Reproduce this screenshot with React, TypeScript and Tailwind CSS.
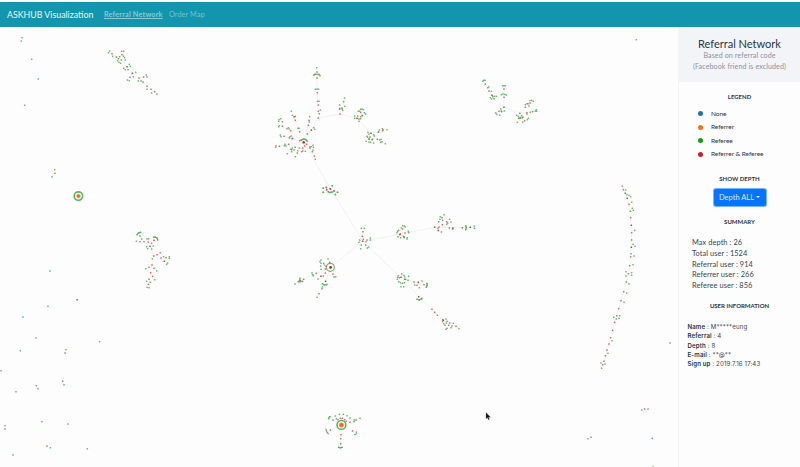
import React from "react";

type Cluster = {
  ox: number;
  oy: number;
  links?: string[];
  green?: string;
  red?: string;
  dark?: string;
  orange?: string;
  blue?: string;
  arcs?: string[];
};

// Each cluster keeps its own local grid, three units per pixel.
const clusters: Cluster[] = [
  {
    ox: 0, oy: 0,
    links: ["M336 161L349 171L364 179L381 200L397 220L417 234L429 246L441 259L464 275", "M366 164V180M397 220L390 232M417 234L431 231"],
    green: "66,113 329,153 325,158 338,169 365,154 371,154 371,169 374,173 376,180 359,170 355,176 353,182 357,187 362,190 388,193 391,199 371,205 376,209 384,209 407,217 400,230 382,240 388,242 439,225 441,231 415,243 423,243 441,268 455,279 471,282",
    red: "336,161 349,171 366,164 390,232 417,234 431,231 429,246 441,259 453,268 464,275",
    dark: "381,200 397,220",
    orange: "64,123 364,180",
    blue: "95,178 115,237 74,316",
  },
  {
    ox: 260, oy: 60,
    links: ["M172 36L171 98L175 174L240 162L292 175L333 220L357 240", "M175 174L131 246L211 386L232 420", "M131 246L60 192M131 246L98 164M131 246L72 228M131 246L58 258M131 246L95 272M131 246L163 288M131 246L147 182M240 162L254 114M292 175L303 157M333 220L368 212"],
    green: "170,23 161,45 165,42 177,43 180,47 166,88 171,87 176,88 173,124 177,124 181,150 94,154 97,166 102,170 106,169 57,179 62,176 56,184 58,197 56,200 61,225 63,230 114,205 117,205 81,206 85,203 88,207 149,170 148,186 154,210 161,203 164,208 90,230 94,228 88,234 96,236 48,257 47,262 73,257 75,253 78,258 97,264 92,268 95,275 102,270 82,281 106,290 113,272 125,275 136,274 149,261 150,265 159,256 160,262 159,270 166,298 123,241 126,239 130,237 135,237 139,240 142,244 217,377 190,385 189,397 205,395 209,398 214,397 232,397 226,403 254,114 239,135 254,139 239,145 248,151 247,147 302,148 306,147 310,149 295,154 299,153 313,158 317,162 284,168 306,166 302,170 284,175 302,176 297,184 324,217 327,222 321,229 323,232 328,236 341,224 343,228 318,244 327,246 332,247 341,249 338,237 367,206 369,209 358,210 381,209 355,217 359,240 363,238 362,247 376,251",
    red: "171,36 171,54 172,98 175,135 175,154 178,161 175,174 103,170 106,181 67,185 67,199 92,212 72,229 98,235 86,253 58,259 105,262 95,269 119,215 142,222 154,211 145,196 147,181 119,242 118,264 128,264 134,258 128,273 112,279 163,288 157,275 140,253 153,260 199,383 200,390 222,393 240,162 251,125 246,144 239,148 302,157 307,167 293,168 297,177 327,238 352,238 336,239 366,245 356,216 368,212 330,231",
    dark: "131,247 211,386 291,175 333,220",
    arcs: ["M161 46Q171 38 180 47", "M121 242Q131 231 142 244"],
  },
  {
    ox: 280, oy: 180,
    links: ["M135 0L164 44L248 184L361 162L464 142L583 142", "M248 184L152 262L137 304L111 352M152 262L98 283L45 312", "M248 184L363 293L418 352L456 388L490 421L536 444M363 293L435 314M464 142L486 113"],
    green: "157,17 129,24 130,37 145,35 151,37 157,36 166,44 173,37 244,145 253,145 271,174 271,180 239,180 237,187 258,185 242,206 262,204 266,201 368,137 373,138 376,141 364,144 356,151 353,154 351,158 385,154 386,158 354,170 362,173 370,169 372,173 382,173 381,177 123,240 120,245 123,250 144,237 122,258 123,268 133,255 96,279 98,284 100,287 114,297 123,289 130,288 162,291 167,290 60,295 58,301 60,306 68,304 45,312 111,352 127,321 127,311 133,315 140,314 492,104 481,110 480,118 488,121 509,118 513,126 500,133 474,145 475,152 484,156 519,145 518,148 557,138 559,143 557,149 583,138 583,145 355,287 353,292 352,298 365,282 372,286 374,291 377,298 356,305 361,308 373,308 363,320 371,320 386,289 384,301 426,303 415,308 404,315 418,323 441,310 441,316 439,322 411,358 418,361 425,357 472,406 488,425 491,431 498,417 501,424 499,429 501,445 498,448 513,443 516,438 537,446 520,430",
    red: "139,22 140,29 162,33 249,155 247,169 261,180 244,195 257,195 250,178 368,147 375,159 373,171 359,164 131,250 149,247 138,259 136,267 136,279 123,289 159,282 109,280 71,298 55,305 60,302 126,326 117,341 486,113 476,125 487,134 500,125 503,129 475,151 477,141 508,144 518,144 374,298 367,310 358,293 411,316 402,306 432,314 415,306 456,388 464,397 509,429 506,436 495,436 528,439 488,419",
    dark: "151,27 248,184 361,162 464,142 547,143 571,142 152,262 137,304 363,292 416,350 490,421",
    arcs: ["M139 262a12 12 0 1 0 24 0a12 12 0 1 0-24 0", "M127 311Q134 318 143 312", "M411 357Q420 363 427 353", "M557 137Q562 143 556 150", "M60 296Q58 303 68 306", "M440 309Q445 316 438 322"],
  },
  {
    ox: 60, oy: 160,
    links: ["M229 244H252L270 259L281 288L276 315L266 383", "M281 288L302 279L320 306M270 259L283 241M276 315L290 332"],
    green: "231,224 236,218 242,217 229,244 245,237 261,237 266,236 281,232 286,231 291,234 293,240 260,260 263,266 275,250 280,258 275,267 277,296 301,278 311,290 328,290 328,295 323,309 320,313 257,326 290,333 260,364 271,367 284,359 261,382 267,383",
    red: "240,228 240,245 252,245 265,246 281,288 291,284 303,294 318,293 267,322 282,325 272,338 278,349 267,358 265,373 276,315",
    dark: "282,241 270,259 313,304", blue: "52,419",
    arcs: ["M231 224Q234 217 243 217", "M281 232Q290 229 293 240"],
  },
  {
    ox: 470, oy: 70,
    links: ["M42 33L47 43L57 63L71 86L102 110L149 130L188 94", "M102 47V112L78 130M149 130L199 123"],
    green: "38,34 41,31 45,31 53,53 56,51 64,64 66,76 61,83 65,87 68,80 73,79 79,79 98,47 102,47 106,47 94,74 99,72 105,73 109,75 92,117 94,123 103,123 77,129 80,133 89,136 180,92 185,91 190,94 166,104 171,101 177,108 140,136 145,139 151,142 155,137 148,145 152,145 159,141 171,132 181,127 199,119 200,124 196,123 175,145 172,149 142,157 158,156",
    red: "46,42 57,63 66,76 72,86 102,57 102,82 87,124 95,125 174,101 180,99 166,112 171,128 188,125 146,145 157,143 164,152",
    dark: "102,112", orange: "149,130",
  },
  {
    ox: 590, oy: 170,
    links: ["M97 49L112 85L117 104L124 165V232L120 287L109 336L86 416L57 522L40 579L34 594"],
    green: "97,48 107,60 111,74 117,76 122,80 125,97 127,115 130,121 134,181 129,223 135,229 123,251 132,258 129,284 108,305 125,308 125,316 108,318 117,342 110,369 102,397 89,437 71,442 87,445 79,447 66,512 54,550 33,579 45,582 35,595",
    red: "100,59 117,103 121,124 122,143 125,188 125,210 122,260 119,287 115,311 109,336 101,365 93,392 86,416 80,437 74,457 68,481 62,503 57,522 51,540 46,557 42,574 38,584",
    dark: "106,70 112,85 124,166 124,232",
  },
  {
    ox: 310, oy: 400,
    links: ["M94 75L60 91M94 75L128 94M94 75L91 141M94 75L150 55M94 75L69 59"],
    green: "76,48 88,43 100,43 111,47 120,54 150,55 133,60 79,56 92,116 86,142 91,143 96,142 56,56 59,50",
    red: "69,60 84,59 91,55 97,55 104,59 109,64 120,67 132,65 138,60 61,90 93,104 92,131 128,93",
    arcs: ["M55 57Q56 50 62 49", "M48 86Q47 96 56 102", "M132 104Q141 105 139 94", "M85 142Q91 145 97 142"],
  },
  {
    ox: 0, oy: 260,
    green: "198,269 114,386 192,374 15,497 126,485 151,563 150,33",
    red: "195,279 109,377 188,364 15,507 141,558",
    blue: "231,119 144,139 69,171 108,234 299,245 61,272 3,332 48,395 204,492 262,566 39,585",
  },
  {
    ox: 560, oy: 330,
    green: "245,240 84,326 279,410", red: "254,237 93,322",
    blue: "330,39 264,237 277,325",
  },
  { ox: 0, oy: 0, green: "164,509 156,530 1909,119", red: "165,520" },
];

const tones = [
  ["green", "#48ae50"],
  ["red", "#d9494f"],
  ["dark", "#b51f27"],
  ["orange", "#f66537"],
  ["blue", "#4f91be"],
] as const;

function Dots({ points, color }: { points?: string; color: string }) {
  if (!points) return null;
  return (
    <g fill={color} fillOpacity={0.84}>
      {points.split(" ").map((p, i) => {
        const [x, y] = p.split(",").map(Number);
        return <rect key={i} x={x - 2.3} y={y - 2.3} width={4.6} height={4.6} rx={1} />;
      })}
    </g>
  );
}

function Hub({ x, y, r, core }: { x: number; y: number; r: number; core: number }) {
  return (
    <g>
      <circle cx={x} cy={y} r={r} fill="white" stroke="#54b75b" strokeWidth={1.6} />
      <circle cx={x} cy={y} r={core + 0.7} fill="#ffb38d" />
      <circle cx={x} cy={y} r={core} fill="#fb650d" />
    </g>
  );
}

function Network() {
  return (
    <svg className="block h-[440px] w-[678px]" viewBox="0 27 678 440">
      {clusters.map((c, i) => (
        <g key={i} transform={`translate(${c.ox} ${c.oy}) scale(.333333)`}>
          {c.links?.map((d, j) => <path key={j} d={d} fill="none" stroke="#e9e9e9" strokeWidth={1.8} />)}
          {c.arcs?.map((d, j) => <path key={j} d={d} fill="none" stroke="#65ba68" strokeWidth={3.4} />)}
          {tones.map(([k, color]) => <Dots key={k} points={c[k]} color={color} />)}
        </g>
      ))}
      <Hub x={78.4} y={196.1} r={4.2} core={1.6} />
      <Hub x={341.4} y={424.9} r={4.4} core={2} />
      <circle cx="303.7" cy="142.4" r="1.2" fill="#b51e26" />
      <circle cx="330.6" cy="267.4" r="1.3" fill="#c11e26" />
      <path d="M486 412.6v6.2l1.4-1.2 1 2.2 1-.4-.9-2.1h2Z" fill="#111" stroke="#777" strokeWidth=".3" />
    </svg>
  );
}

const legend = [
  ["bg-[#1974b5]", "None"],
  ["bg-[#ff6f0b]", "Referrer"],
  ["bg-[#159b16]", "Referee"],
  ["bg-[#d21b25]", "Referrer & Referee"],
];

const summary = ["Max depth : 26", "Total user : 1524", "Referral user : 914", "Referrer user : 266", "Referee user : 856"];

const user = [
  ["Name", "M*****eung"],
  ["Referral", "4"],
  ["Depth", "8"],
  ["E-mail", "**@**"],
  ["Sign up", "2019.7.16 17:43"],
];

function Heading({ children }: { children: React.ReactNode }) {
  return <h2 className="h-[10px] text-center text-[6px] leading-[10px] font-bold text-[#273449]">{children}</h2>;
}

export default function App() {
  return (
    <div className="flex h-[467px] w-[800px] flex-col overflow-hidden bg-[#fdfdfd] pt-[2px] font-['Lato','Open_Sans',sans-serif] whitespace-nowrap">
      <header className="flex h-[25px] shrink-0 items-center bg-[#1395ad] pt-[1px] pl-[7px]">
        <span className="w-[97px] shrink-0 text-[8.8px] text-[#e5f8fb]">ASKHUB Visualization</span>
        <span className="w-[65px] shrink-0 text-[7.3px] font-bold tracking-[0.022em] text-[#83cbd8]">
          <span className="underline underline-offset-1">Referral Network</span>
        </span>
        <span className="text-[7.3px] tracking-[0.01em] text-[#72c2ce]">Order Map</span>
      </header>
      <div className="flex min-h-0 flex-1">
        <main className="w-[678px] shrink-0">
          <Network />
        </main>
        <aside className="w-[122px] shrink-0 border-l border-[#f4f4f5] text-[#384455]">
          <div className="h-[55px] bg-[#f3f4f7] pt-[10px] text-center">
            <h1 className="text-[11px] leading-[14px] text-[#27364a]">Referral Network</h1>
            <p className="text-[7.1px] leading-[10.7px] tracking-[0.015em] text-[#8b929c]">
              Based on referral code
              <br />
              (Facebook friend is excluded)
            </p>
          </div>
          <div className="pt-[10px]">
            <Heading>LEGEND</Heading>
            <ul className="mt-[5px] pl-[19px]">
              {legend.map(([color, label]) => (
                <li key={label} className="flex h-[13.5px] items-center text-[6.5px] tracking-[-0.005em] text-[#273449]">
                  <span className={`mr-[8px] size-[5px] rounded-full ${color}`} />
                  {label}
                </li>
              ))}
            </ul>
          </div>
          <div className="pt-[13px]">
            <Heading>SHOW DEPTH</Heading>
            <button className="mx-auto mt-[5px] flex h-[17px] w-[52px] items-center justify-center gap-[2px] rounded-[2px] bg-[#0674ff] pt-[1px] text-[7.5px] text-[#dcecff] ring-1 ring-[#74b5ff]">
              Depth ALL
              <span className="mb-[2px] border-x-[2px] border-t-[2px] border-x-transparent border-t-white" />
            </button>
          </div>
          <div className="pt-[11px]">
            <Heading>SUMMARY</Heading>
            <ul className="mt-[11px] pl-[13px] text-[7.4px] leading-[10.75px] tracking-[0.01em]">
              {summary.map((s) => <li key={s}>{s}</li>)}
            </ul>
          </div>
          <div className="pt-[9px]">
            <Heading>USER INFORMATION</Heading>
            <ul className="mt-[11px] pl-[8.5px] font-['Inter',sans-serif] text-[6.1px] leading-[9.4px] tracking-[0.02em]">
              {user.map(([k, v]) => (
                <li key={k}>
                  <b className="font-semibold text-[#273449]">{k}</b> : {v}
                </li>
              ))}
            </ul>
          </div>
        </aside>
      </div>
    </div>
  );
}
